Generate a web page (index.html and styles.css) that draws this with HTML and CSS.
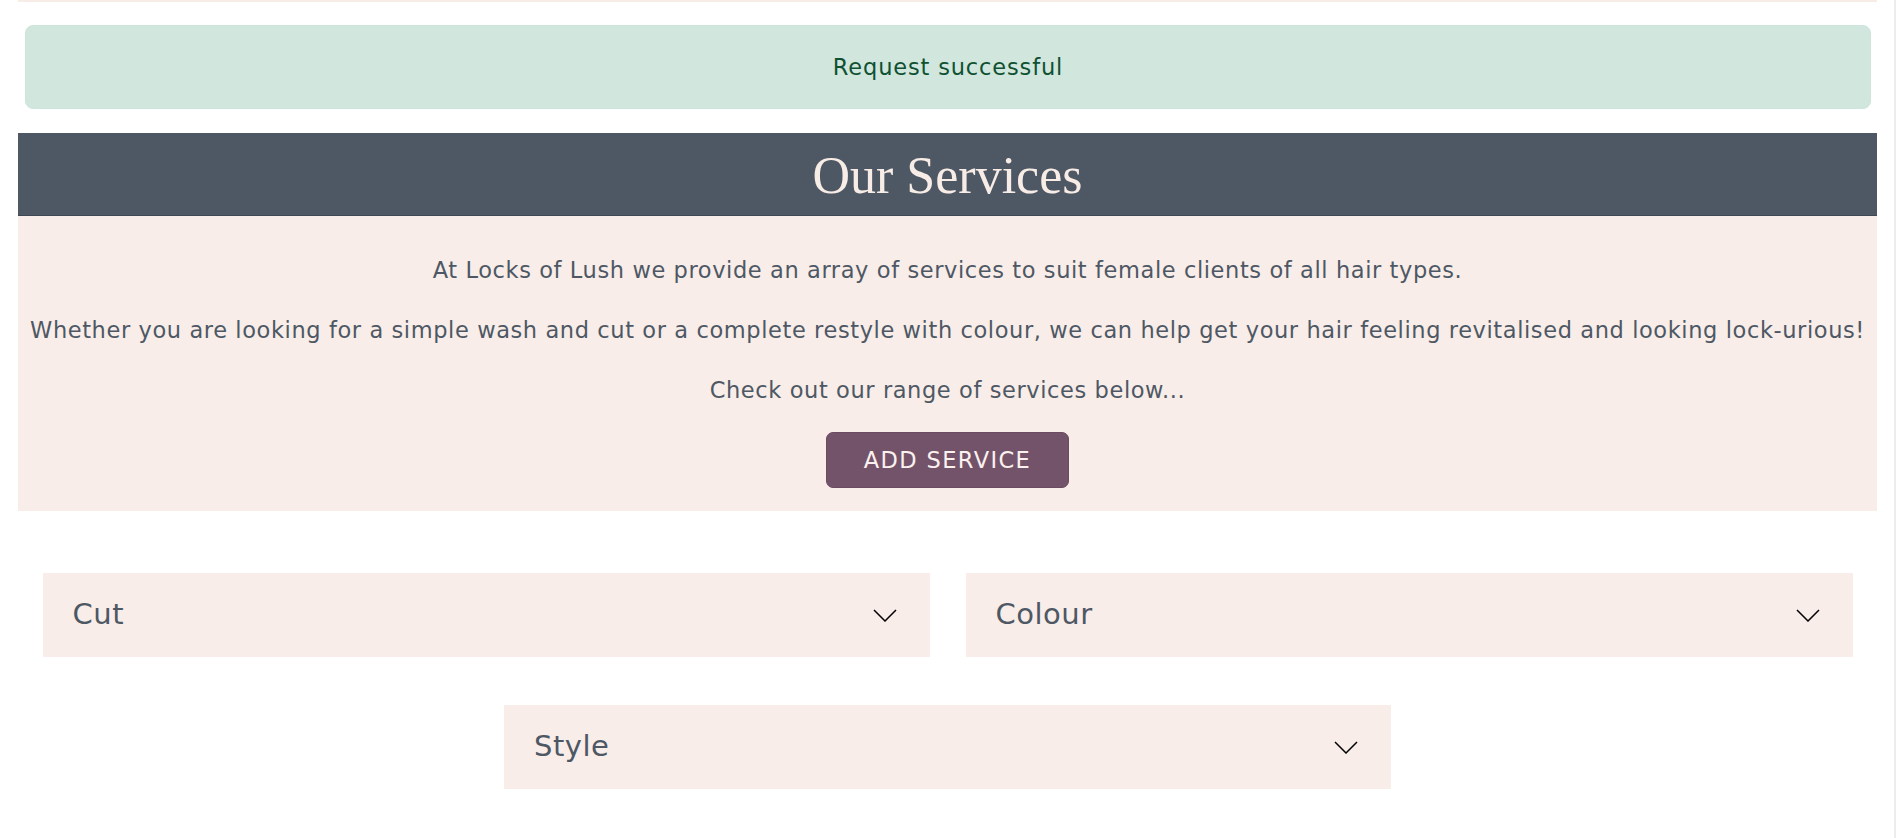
FILE: index.html
```html
<!DOCTYPE html>
<html lang="en">
<head>
<meta charset="utf-8">
<title>Our Services - Locks of Lush</title>
<link rel="stylesheet" href="styles.css">
</head>
<body>
<div class="page">
  <main class="container">
    <div class="top-rule"></div>
    <div class="alert">Request successful</div>
    <header class="services-header">
      <h1 class="services-title">Our Services</h1>
    </header>
    <section class="intro">
      <p>At Locks of Lush we provide an array of services to suit female clients of all hair types.</p>
      <p>Whether you are looking for a simple wash and cut or a complete restyle with colour, we can help get your hair feeling revitalised and looking lock-urious!</p>
      <p>Check out our range of services below...</p>
      <button class="btn-add" type="button">ADD SERVICE</button>
    </section>
    <div class="categories">
      <div class="category">
        <span class="category-name">Cut</span>
        <svg class="chevron" width="24" height="13" viewBox="0 0 24 13"><polyline points="1,1 12,12 23,1" fill="none" stroke="#000" stroke-width="1.5"/></svg>
      </div>
      <div class="category">
        <span class="category-name">Colour</span>
        <svg class="chevron" width="24" height="13" viewBox="0 0 24 13"><polyline points="1,1 12,12 23,1" fill="none" stroke="#000" stroke-width="1.5"/></svg>
      </div>
      <div class="category">
        <span class="category-name">Style</span>
        <svg class="chevron" width="24" height="13" viewBox="0 0 24 13"><polyline points="1,1 12,12 23,1" fill="none" stroke="#000" stroke-width="1.5"/></svg>
      </div>
    </div>
  </main>
</div>
</body>
</html>
```

FILE: styles.css
```css
* { box-sizing: border-box; }

html, body {
  margin: 0;
  padding: 0;
  background: #ffffff;
}

body {
  font-family: "DejaVu Sans", "Open Sans", sans-serif;
  color: #4e5865;
}

.page {
  width: 1896px;
  height: 838px;
  overflow: hidden;
  padding: 0 17px 0 18px;
  border-right: 2px solid #ececec;
}

.container {
  width: 1859px;
  display: flex;
  flex-direction: column;
}

.top-rule {
  height: 2px;
  background: #f8ece7;
}

.alert {
  margin: 23px 6px 0 7px;
  height: 84px;
  display: flex;
  align-items: center;
  justify-content: center;
  background: #d1e7dd;
  border: 1px solid #cfe5db;
  border-radius: 8px;
  color: #0f5132;
  font-size: 22.5px;
  letter-spacing: 0.85px;
  padding-bottom: 1px;
}

.services-header {
  margin-top: 24px;
  height: 83px;
  background: #4e5865;
  border-bottom: 1px solid #3f4752;
  display: flex;
  align-items: center;
  justify-content: center;
}

.services-title {
  margin: 0;
  font-family: "Liberation Serif", "Times New Roman", serif;
  font-weight: 400;
  font-size: 52px;
  line-height: 1;
  color: #f8ece6;
  padding-top: 3px;
}

.intro {
  background: #f8ede8;
  padding: 39px 0 23px;
  display: flex;
  flex-direction: column;
  align-items: center;
  text-align: center;
}

.intro p {
  margin: 0 0 30px;
  font-size: 22.5px;
  line-height: 30px;
  letter-spacing: 0.6px;
  white-space: nowrap;
}

.intro p:nth-of-type(3) {
  margin-bottom: 27px;
}

.btn-add {
  width: 243px;
  height: 56px;
  border: 1px solid #6b4b62;
  border-radius: 7px;
  background: #73536a;
  color: #fbf1ee;
  font-family: inherit;
  font-size: 22.5px;
  letter-spacing: 1.4px;
  padding: 0;
}

.categories {
  margin-top: 62px;
  display: flex;
  flex-wrap: wrap;
  justify-content: center;
  column-gap: 36px;
  row-gap: 48px;
}

.category {
  width: 887px;
  height: 84px;
  background: #f8ede8;
  display: flex;
  align-items: center;
  justify-content: space-between;
  padding: 0 33px 0 30px;
}

.category-name {
  font-size: 29px;
  letter-spacing: 0.5px;
  color: #4e5865;
  padding-bottom: 2px;
}

.chevron {
  display: block;
}
```
